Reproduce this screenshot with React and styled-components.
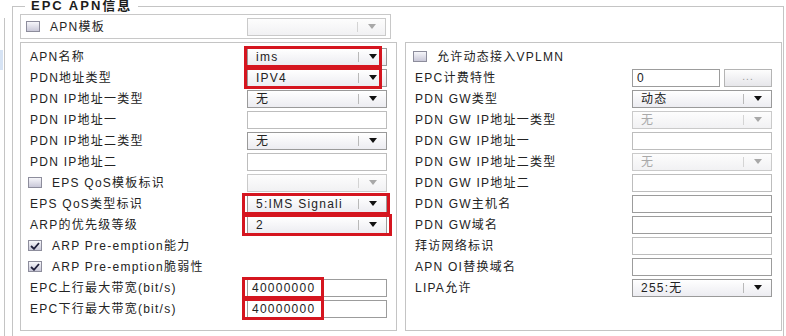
import React from "react";
import styled, { createGlobalStyle } from "styled-components";

const Global = createGlobalStyle`
  html, body { margin: 0; padding: 0; background: #fff; }
  body {
    font-family: "Liberation Sans", "Noto Sans CJK SC", Arial, sans-serif;
    font-size: 12px;
    letter-spacing: 1.25px;
    color: #232323;
  }
`;

const Page = styled.div`
  display: flex;
  width: 786px;
  height: 336px;
  overflow: hidden;
`;

const SideStub = styled.div`
  position: relative;
  flex: none;
  width: 4px;
  height: 330px;
  margin-top: 18px;
  margin-right: 7px;
  border-right: 1px solid #c4c4c4;
`;

const StubMark = styled.div`
  position: absolute;
  left: 0;
  top: 32px;
  width: 3px;
  height: 20px;
  background: #d6e3f4;
`;

const Fieldset = styled.fieldset`
  flex: none;
  margin: 0;
  min-width: 0;
  width: 772px;
  height: 350px;
  box-sizing: border-box;
  border: 1px solid #c4c4c4;
  padding: 2px 1px 10px 7px;
`;

const Legend = styled.legend`
  margin-left: 5px;
  padding: 0 6px;
  font-size: 13px;
  font-weight: bold;
  line-height: 12px;
  letter-spacing: 2px;
  color: #1c1c1c;
`;

const TemplateBox = styled.div`
  display: flex;
  align-items: center;
  width: 371px;
  height: 25px;
  box-sizing: border-box;
  border: 1px solid #c8c8c8;
  padding: 0 4px 0 7px;
`;

const Panels = styled.div`
  display: grid;
  grid-template-columns: 377px 377px;
  column-gap: 8px;
  margin-top: 3px;
`;

const Panel = styled.div`
  box-sizing: border-box;
  height: 289px;
  border: 1px solid #c4c4c4;
  padding: 3px 9px 10px 9px;
`;

const Row = styled.div`
  display: flex;
  align-items: center;
  height: 21px;
`;

const Label = styled.div`
  flex: 1;
  white-space: nowrap;
  line-height: 14px;
`;

const CheckLabel = styled.div`
  display: flex;
  align-items: center;
  flex: 1;
  margin-left: -2px;
  white-space: nowrap;
  line-height: 14px;
`;

const Box = styled.span`
  flex: none;
  width: 14px;
  height: 11px;
  margin-right: 10px;
  box-sizing: border-box;
  border: 1px solid #8d8d9c;
  background: linear-gradient(#f6f6fa, #c9c8d8);
  display: flex;
  align-items: center;
  justify-content: center;
`;

const Control = styled.div`
  position: relative;
  flex: none;
  width: ${(p) => p.$w || 140}px;
  height: 18px;
  display: flex;
  gap: 4px;
`;

const Input = styled.div`
  flex: 1;
  height: 18px;
  box-sizing: border-box;
  border: 1px solid ${(p) => (p.$dark ? "#9c9c9c" : "#bdbdbd")};
  background: #fff;
  padding-left: 4px;
  line-height: 16px;
  white-space: nowrap;
  overflow: hidden;
`;

const DotsButton = styled.div`
  flex: none;
  width: 48px;
  height: 18px;
  box-sizing: border-box;
  border: 1px solid #b4b4b4;
  background: linear-gradient(#fdfdfd, #e6e6ea);
  color: #9a9a9a;
  font-size: 10px;
  line-height: 14px;
  text-align: center;
  letter-spacing: 1px;
`;

const SelectBox = styled.div`
  flex: 1;
  display: flex;
  align-items: center;
  height: 18px;
  box-sizing: border-box;
  border: 1px solid ${(p) => (p.$disabled ? "#cacaca" : "#9a9a9a")};
  background: ${(p) =>
    p.$disabled ? "linear-gradient(#fdfdfd, #f1f1f3)" : "linear-gradient(#ffffff, #ececf1)"};
`;

const SelectText = styled.span`
  flex: 1;
  padding-left: 8px;
  white-space: nowrap;
  overflow: hidden;
  line-height: 16px;
  color: ${(p) => (p.$disabled ? "#a9a9a9" : "#222")};
`;

const SelectSep = styled.span`
  flex: none;
  width: 1px;
  align-self: stretch;
  margin: 3px 0;
  background: ${(p) => (p.$disabled ? "#d4d4d4" : "#b9b9b9")};
`;

const SelectArrow = styled.span`
  flex: none;
  width: 27px;
  display: flex;
  align-items: center;
  justify-content: center;
`;

const Highlight = styled.div`
  position: absolute;
  top: -2px;
  bottom: -2px;
  left: ${(p) => p.$l}px;
  right: ${(p) => p.$r}px;
  border: 3px solid #d5151f;
  pointer-events: none;
`;

function Check({ checked }) {
  return (
    <Box>
      {checked && (
        <svg width="10" height="8" viewBox="0 0 10 8">
          <path d="M1 4 L4 6.8 L9 1" fill="none" stroke="#1d1d3a" strokeWidth="1.8" />
        </svg>
      )}
    </Box>
  );
}

function Select({ value = "", disabled }) {
  return (
    <SelectBox $disabled={disabled}>
      <SelectText $disabled={disabled}>{value}</SelectText>
      <SelectSep $disabled={disabled} />
      <SelectArrow>
        <svg width="8" height="5" viewBox="0 0 8 5">
          <path d="M0 0 H8 L4 5 Z" fill={disabled ? "#a8a8a8" : "#111"} />
        </svg>
      </SelectArrow>
    </SelectBox>
  );
}

function Field({ item }) {
  const { type, value, disabled, dark, hl } = item;
  let inner = null;
  if (type === "select") inner = <Select value={value} disabled={disabled} />;
  else if (type === "input") inner = <Input $dark={dark}>{value}</Input>;
  else if (type === "inputBtn")
    inner = (
      <>
        <Input $dark>{value}</Input>
        <DotsButton>...</DotsButton>
      </>
    );
  if (!inner) return null;
  return (
    <Control>
      {inner}
      {hl && <Highlight $l={hl[0]} $r={hl[1]} />}
    </Control>
  );
}

function FormRow({ item }) {
  return (
    <Row>
      {item.check !== undefined ? (
        <CheckLabel>
          <Check checked={item.check} />
          {item.label}
        </CheckLabel>
      ) : (
        <Label>{item.label}</Label>
      )}
      <Field item={item} />
    </Row>
  );
}

const leftRows = [
  { label: "APN名称", type: "select", value: "ims", hl: [-3, 5] },
  { label: "PDN地址类型", type: "select", value: "IPV4", hl: [-3, 5] },
  { label: "PDN IP地址一类型", type: "select", value: "无" },
  { label: "PDN IP地址一", type: "input", value: "" },
  { label: "PDN IP地址二类型", type: "select", value: "无" },
  { label: "PDN IP地址二", type: "input", value: "" },
  { label: "EPS QoS模板标识", check: false, type: "select", value: "", disabled: true },
  { label: "EPS QoS类型标识", type: "select", value: "5:IMS Signali", hl: [-5, -3] },
  { label: "ARP的优先级等级", type: "select", value: "2", hl: [-5, -5] },
  { label: "ARP Pre-emption能力", check: true },
  { label: "ARP Pre-emption脆弱性", check: true },
  { label: "EPC上行最大带宽(bit/s)", type: "input", value: "40000000", dark: true, hl: [-5, 63] },
  { label: "EPC下行最大带宽(bit/s)", type: "input", value: "40000000", dark: true, hl: [-5, 63] },
];

const rightRows = [
  { label: "允许动态接入VPLMN", check: false },
  { label: "EPC计费特性", type: "inputBtn", value: "0" },
  { label: "PDN GW类型", type: "select", value: "动态" },
  { label: "PDN GW IP地址一类型", type: "select", value: "无", disabled: true },
  { label: "PDN GW IP地址一", type: "input", value: "" },
  { label: "PDN GW IP地址二类型", type: "select", value: "无", disabled: true },
  { label: "PDN GW IP地址二", type: "input", value: "" },
  { label: "PDN GW主机名", type: "input", value: "", dark: true },
  { label: "PDN GW域名", type: "input", value: "", dark: true },
  { label: "拜访网络标识", type: "input", value: "" },
  { label: "APN OI替换域名", type: "input", value: "", dark: true },
  { label: "LIPA允许", type: "select", value: "255:无" },
];

export default function App() {
  return (
    <>
      <Global />
      <Page>
        <SideStub>
          <StubMark />
        </SideStub>
        <Fieldset>
          <Legend>EPC APN信息</Legend>
          <TemplateBox>
            <CheckLabel>
              <Check checked={false} />
              APN模板
            </CheckLabel>
            <Control $w={139}>
              <Select value="" disabled />
            </Control>
          </TemplateBox>
          <Panels>
            <Panel>
              {leftRows.map((r, i) => (
                <FormRow key={i} item={r} />
              ))}
            </Panel>
            <Panel>
              {rightRows.map((r, i) => (
                <FormRow key={i} item={r} />
              ))}
            </Panel>
          </Panels>
        </Fieldset>
      </Page>
    </>
  );
}
